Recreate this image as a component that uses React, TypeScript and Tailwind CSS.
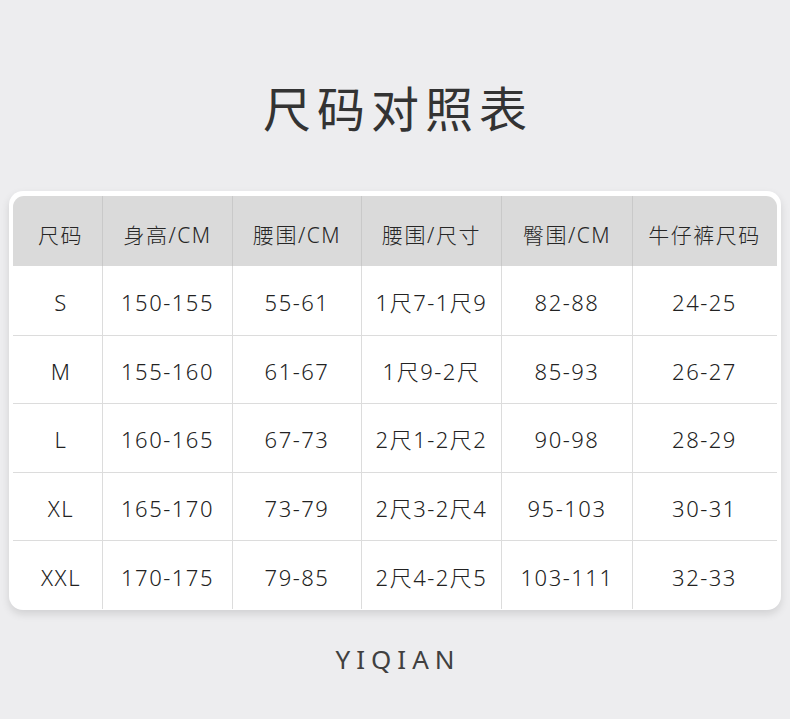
import React from "react";

const headers = ["尺码", "身高/CM", "腰围/CM", "腰围/尺寸", "臀围/CM", "牛仔裤尺码"];
const rows = [
  ["S", "150-155", "55-61", "1尺7-1尺9", "82-88", "24-25"],
  ["M", "155-160", "61-67", "1尺9-2尺", "85-93", "26-27"],
  ["L", "160-165", "67-73", "2尺1-2尺2", "90-98", "28-29"],
  ["XL", "165-170", "73-79", "2尺3-2尺4", "95-103", "30-31"],
  ["XXL", "170-175", "79-85", "2尺4-2尺5", "103-111", "32-33"],
];
const widths = [89, 130, 129, 140, 131, 144];

export default function App() {
  return (
    <div
      className="w-[790px] h-[719px] bg-[#ededef] flex flex-col items-center overflow-hidden"
      style={{ fontFamily: '"Noto Sans", "Noto Sans CJK SC", sans-serif' }}
    >
      <h1 className="mt-[78px] h-[62px] text-[48px] leading-[62px] font-normal text-[#333333] tracking-[6px] pl-[6px]">
        尺码对照表
      </h1>
      <div className="mt-[51px] w-[772px] bg-white rounded-[14px] p-[4px] pt-[5px] pb-[1px] shadow-[0_4px_8px_rgba(0,0,0,0.12)]">
        <div className="rounded-t-[11px] overflow-hidden">
          <div className="flex h-[70px] bg-[#dadada]">
            {headers.map((h, i) => (
              <div
                key={i}
                style={{ width: widths[i] }}
                className={`flex items-center justify-center pt-[9px] text-[21px] font-light text-[#262626] tracking-[1.5px] ${i > 0 ? "border-l border-[#c9c9c9]" : "pl-[6px]"}`}
              >
                {h}
              </div>
            ))}
          </div>
          {rows.map((r, ri) => (
            <div key={ri} className={`flex h-[68.6px] ${ri > 0 ? "border-t border-[#dcdcdc]" : ""}`}>
              {r.map((c, ci) => (
                <div
                  key={ci}
                  style={{ width: widths[ci] }}
                  className={`flex items-center justify-center pt-[4px] text-[22px] font-light text-[#222222] tracking-[1.5px] ${ci > 0 ? "border-l border-[#dcdcdc]" : "pl-[7px]"}`}
                >
                  {c}
                </div>
              ))}
            </div>
          ))}
        </div>
      </div>
      <div className="mt-[34px] text-[26px] leading-[30px] font-normal text-[#404040] tracking-[6px] pl-[6px]">
        YIQIAN
      </div>
    </div>
  );
}
